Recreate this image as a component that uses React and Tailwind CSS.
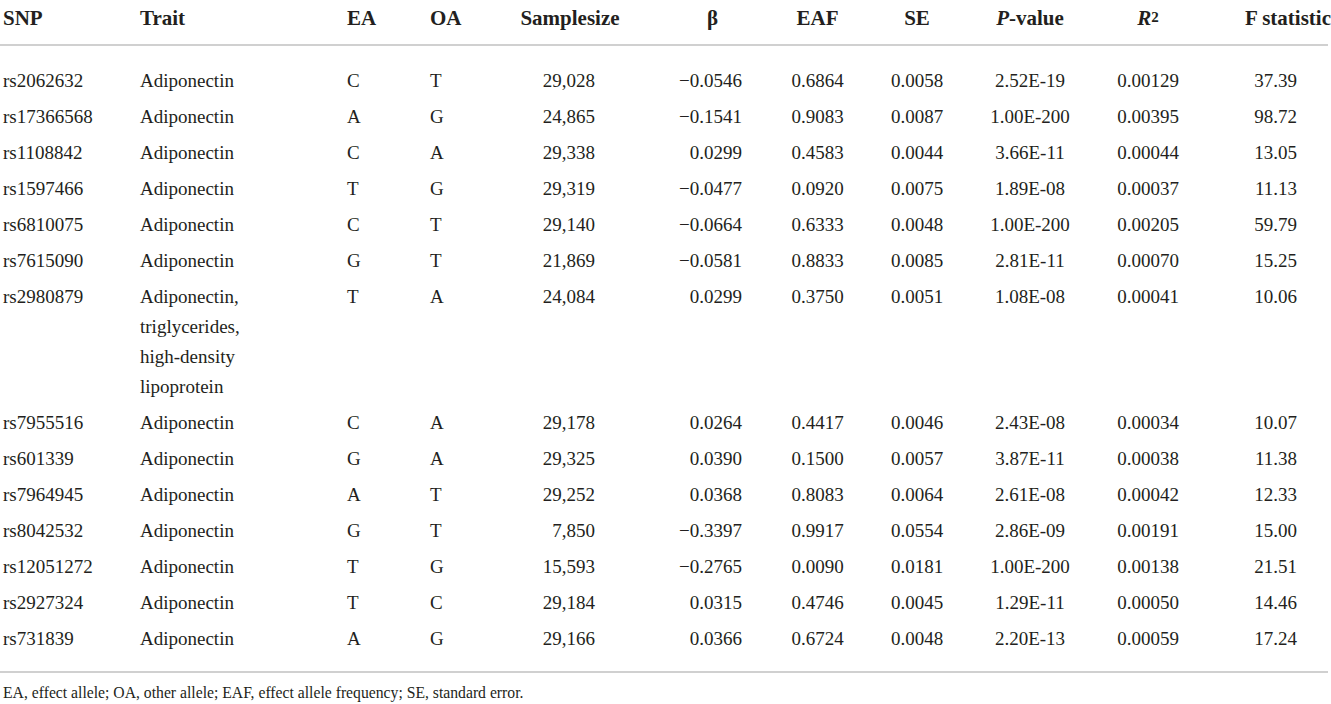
const rows = [
  ['rs2062632', ['Adiponectin'], 'C', 'T', '29,028', '\u22120.0546', '0.6864', '0.0058', '2.52E-19', '0.00129', '37.39'],
  ['rs17366568', ['Adiponectin'], 'A', 'G', '24,865', '\u22120.1541', '0.9083', '0.0087', '1.00E-200', '0.00395', '98.72'],
  ['rs1108842', ['Adiponectin'], 'C', 'A', '29,338', '0.0299', '0.4583', '0.0044', '3.66E-11', '0.00044', '13.05'],
  ['rs1597466', ['Adiponectin'], 'T', 'G', '29,319', '\u22120.0477', '0.0920', '0.0075', '1.89E-08', '0.00037', '11.13'],
  ['rs6810075', ['Adiponectin'], 'C', 'T', '29,140', '\u22120.0664', '0.6333', '0.0048', '1.00E-200', '0.00205', '59.79'],
  ['rs7615090', ['Adiponectin'], 'G', 'T', '21,869', '\u22120.0581', '0.8833', '0.0085', '2.81E-11', '0.00070', '15.25'],
  ['rs2980879', ['Adiponectin,', 'triglycerides,', 'high-density', 'lipoprotein'], 'T', 'A', '24,084', '0.0299', '0.3750', '0.0051', '1.08E-08', '0.00041', '10.06'],
  ['rs7955516', ['Adiponectin'], 'C', 'A', '29,178', '0.0264', '0.4417', '0.0046', '2.43E-08', '0.00034', '10.07'],
  ['rs601339', ['Adiponectin'], 'G', 'A', '29,325', '0.0390', '0.1500', '0.0057', '3.87E-11', '0.00038', '11.38'],
  ['rs7964945', ['Adiponectin'], 'A', 'T', '29,252', '0.0368', '0.8083', '0.0064', '2.61E-08', '0.00042', '12.33'],
  ['rs8042532', ['Adiponectin'], 'G', 'T', '7,850', '\u22120.3397', '0.9917', '0.0554', '2.86E-09', '0.00191', '15.00'],
  ['rs12051272', ['Adiponectin'], 'T', 'G', '15,593', '\u22120.2765', '0.0090', '0.0181', '1.00E-200', '0.00138', '21.51'],
  ['rs2927324', ['Adiponectin'], 'T', 'C', '29,184', '0.0315', '0.4746', '0.0045', '1.29E-11', '0.00050', '14.46'],
  ['rs731839', ['Adiponectin'], 'A', 'G', '29,166', '0.0366', '0.6724', '0.0048', '2.20E-13', '0.00059', '17.24'],
];

const grid = 'grid grid-cols-[140px_207px_83px_75px_130px_155px_55px_144px_82px_154px_106px]';

export default function App() {
  return (
    <div
      className="w-[1331px] h-[704px] bg-white text-[#231f20] overflow-hidden"
      style={{ fontFamily: '"Liberation Serif", "Times New Roman", serif' }}
    >
      {/* header */}
      <div className={`${grid} w-[1328px] border-b-2 border-[#d0d0d0] pb-[8px] text-[21px] font-bold leading-[36px] whitespace-nowrap`}>
        <div className="pl-[3px]">SNP</div>
        <div>Trait</div>
        <div>EA</div>
        <div>OA</div>
        <div className="text-center">Samplesize</div>
        <div className="text-center">β</div>
        <div className="text-center">EAF</div>
        <div className="text-center">SE</div>
        <div className="text-center">
          <span className="italic">P</span>-value
        </div>
        <div className="text-center">
          <span className="italic">R</span>
          <sup className="text-[15px] relative -top-[3px]">2</sup>
        </div>
        <div className="text-right">F statistic</div>
      </div>

      {/* body */}
      <div className="w-[1328px] border-b-2 border-[#d0d0d0] pt-[17px] pb-[14px] text-[19px] leading-[30px] whitespace-nowrap">
        {rows.map((r) => (
          <div key={r[0]} className={`${grid} items-start py-[3px]`}>
            <div className="pl-[3px]">{r[0]}</div>
            <div>
              {r[1].map((t) => (
                <div key={t}>{t}</div>
              ))}
            </div>
            <div>{r[2]}</div>
            <div>{r[3]}</div>
            <div className="text-right pr-[40px]">{r[4]}</div>
            <div className="text-right pr-[48px]">{r[5]}</div>
            <div className="text-center">{r[6]}</div>
            <div className="text-center">{r[7]}</div>
            <div className="text-center">{r[8]}</div>
            <div className="text-center">{r[9]}</div>
            <div className="text-right pr-[34px]">{r[10]}</div>
          </div>
        ))}
      </div>

      {/* footnote */}
      <p className="mt-[10px] pl-[3px] text-[15.7px] leading-[20px]">
        EA, effect allele; OA, other allele; EAF, effect allele frequency; SE, standard error.
      </p>
    </div>
  );
}
